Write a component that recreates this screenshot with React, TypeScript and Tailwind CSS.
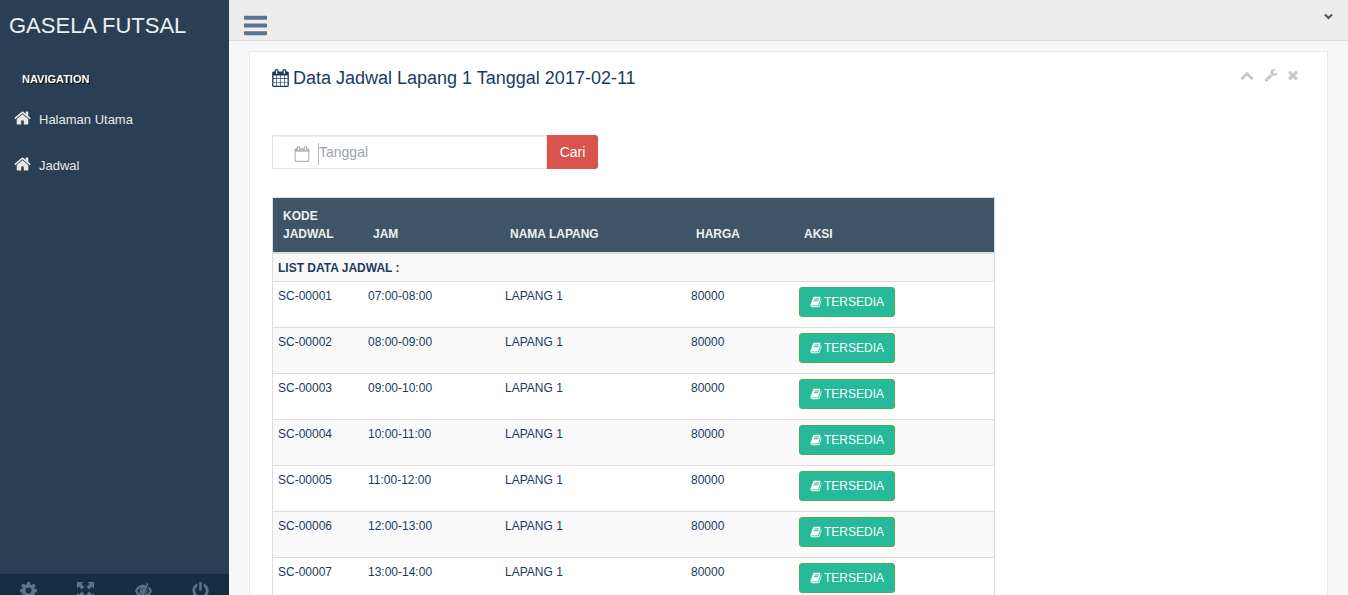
import React from 'react';

type IconProps = { className?: string };

const makeIcon = (path: string, viewBox = '0 0 1792 1792') => ({ className }: IconProps) => (
  <svg viewBox={viewBox} fill="currentColor" className={className} aria-hidden="true">
    <path d={path} fillRule="evenodd" />
  </svg>
);

const HomeIcon = makeIcon(
  'M1472 992v480q0 26-19 45t-45 19h-384v-384h-256v384h-384q-26 0-45-19t-19-45v-480q0-1 .5-3t.5-3l575-474 575 474q1 2 1 6zm223-69l-62 74q-8 9-21 11h-3q-13 0-21-7l-692-577-692 577q-12 8-24 7-13-2-21-11l-62-74q-8-10-7-23.5t11-21.5l719-599q32-26 76-26t76 26l244 204v-195q0-14 9-23t23-9h192q14 0 23 9t9 23v408l219 182q10 8 11 21.5t-7 23.5z',
  '64 0 1664 1792'
);
const BarsIcon = makeIcon(
  'M1664 1344v128q0 26-19 45t-45 19h-1408q-26 0-45-19t-19-45v-128q0-26 19-45t45-19h1408q26 0 45 19t19 45zm0-512v128q0 26-19 45t-45 19h-1408q-26 0-45-19t-19-45v-128q0-26 19-45t45-19h1408q26 0 45 19t19 45zm0-512v128q0 26-19 45t-45 19h-1408q-26 0-45-19t-19-45v-128q0-26 19-45t45-19h1408q26 0 45 19t19 45z'
);
const CalendarIcon = makeIcon(
  'M192 1664h288v-288h-288v288zm352 0h320v-288h-320v288zm-352-352h288v-320h-288v320zm352 0h320v-320h-320v320zm-352-384h288v-288h-288v288zm736 736h320v-288h-320v288zm-384-736h320v-288h-320v288zm768 736h288v-288h-288v288zm-384-352h320v-320h-320v320zm-352-864v-288q0-13-9.5-22.5t-22.5-9.5h-64q-13 0-22.5 9.5t-9.5 22.5v288q0 13 9.5 22.5t22.5 9.5h64q13 0 22.5-9.5t9.5-22.5zm736 864h288v-320h-288v320zm-384-384h320v-288h-320v288zm384 0h288v-288h-288v288zm32-480v-288q0-13-9.5-22.5t-22.5-9.5h-64q-13 0-22.5 9.5t-9.5 22.5v288q0 13 9.5 22.5t22.5 9.5h64q13 0 22.5-9.5t9.5-22.5zm384-64v1280q0 52-38 90t-90 38h-1408q-52 0-90-38t-38-90v-1280q0-52 38-90t90-38h128v-96q0-66 47-113t113-47h64q66 0 113 47t47 113v96h384v-96q0-66 47-113t113-47h64q66 0 113 47t47 113v96h128q52 0 90 38t38 90z',
  '64 0 1664 1792'
);
const CalendarOutlineIcon = makeIcon(
  'M192 1664h1408v-1024h-1408v1024zm384-1216v-288q0-13-9.5-22.5t-22.5-9.5h-64q-13 0-22.5 9.5t-9.5 22.5v288q0 13 9.5 22.5t22.5 9.5h64q13 0 22.5-9.5t9.5-22.5zm768 0v-288q0-13-9.5-22.5t-22.5-9.5h-64q-13 0-22.5 9.5t-9.5 22.5v288q0 13 9.5 22.5t22.5 9.5h64q13 0 22.5-9.5t9.5-22.5zm384-64v1280q0 52-38 90t-90 38h-1408q-52 0-90-38t-38-90v-1280q0-52 38-90t90-38h128v-96q0-66 47-113t113-47h64q66 0 113 47t47 113v96h384v-96q0-66 47-113t113-47h64q66 0 113 47t47 113v96h128q52 0 90 38t38 90z'
);
const ChevronUpIcon = makeIcon(
  'M1683 1331l-166 165q-19 19-45 19t-45-19l-531-531-531 531q-19 19-45 19t-45-19l-166-165q-19-19-19-45.5t19-45.5l742-741q19-19 45-19t45 19l742 741q19 19 19 45.5t-19 45.5z'
);
const WrenchIcon = makeIcon(
  'M448 1472q0-26-19-45t-45-19-45 19-19 45 19 45 45 19 45-19 19-45zm644-420l-682 682q-37 37-90 37-52 0-91-37l-106-108q-38-36-38-90 0-53 38-91l681-681q39 98 114.5 173.5t173.5 114.5zm634-435q0 39-23 106-47 134-164.5 217.5t-258.5 83.5q-185 0-316.5-131.5t-131.5-316.5 131.5-316.5 316.5-131.5q58 0 121.5 16.5t107.5 46.5q16 11 16 28t-16 28l-293 169v224l193 107q5-3 79-48.5t135.5-81 70.5-35.5q15 0 23.5 10t8.5 25z'
);
const CloseIcon = makeIcon(
  'M1490 1322q0 40-28 68l-136 136q-28 28-68 28t-68-28l-294-294-294 294q-28 28-68 28t-68-28l-136-136q-28-28-28-68t28-68l294-294-294-294q-28-28-28-68t28-68l136-136q28-28 68-28t68 28l294 294 294-294q28-28 68-28t68 28l136 136q28 28 28 68t-28 68l-294 294 294 294q28 28 28 68z'
);
const BookIcon = makeIcon(
  'M1703 478q40 57 18 129l-275 906q-19 64-76.5 107.5t-122.5 43.5h-923q-77 0-148.5-53.5t-99.5-131.5q-24-67-2-127 0-4 3-27t4-37q1-8-3-21.5t-3-19.5q2-11 8-21t16.5-23.5 16.5-23.5q23-38 45-91.5t30-91.5q3-10 .5-30t-.5-28q3-11 17-28t17-23q21-36 42-92t25-90q1-9-2.5-32t.5-28q4-13 22-30.5t22-22.5q19-26 42.5-84.5t27.5-96.5q1-8-3-25.5t-2-26.5q2-8 9-18t18-23 17-21q8-12 16.5-30.5t15-35 16-36 19.5-32 26.5-23.5 36-11.5 47.5 5.5l-1 3q38-9 51-9h761q74 0 114 56t18 130l-274 906q-36 119-71.5 153.5t-128.5 34.5h-869q-27 0-38 15-11 16-1 43 24 70 144 70h923q29 0 56-15.5t35-41.5l300-987q7-22 5-57 38 15 59 43zm-1064 2q-4 13 2 22.5t20 9.5h608q13 0 25.5-9.5t16.5-22.5l21-64q4-13-2-22.5t-20-9.5h-608q-13 0-25.5 9.5t-16.5 22.5zm-83 256q-4 13 2 22.5t20 9.5h608q13 0 25.5-9.5t16.5-22.5l21-64q4-13-2-22.5t-20-9.5h-608q-13 0-25.5 9.5t-16.5 22.5z'
);
const CogIcon = makeIcon(
  'M6.6 0h2.8l.4 2.3 1.2.5 1.9-1.4 2 2-1.4 1.9.5 1.2 2.3.4v2.8l-2.3.4-.5 1.2 1.4 1.9-2 2-1.9-1.4-1.2.5-.4 2.3H6.6l-.4-2.3-1.2-.5-1.9 1.4-2-2 1.4-1.9-.5-1.2-2.3-.4V6.9l2.3-.4.5-1.2-1.4-1.9 2-2 1.9 1.4 1.2-.5zM8 5.2a2.8 2.8 0 1 0 0 5.6 2.8 2.8 0 0 0 0-5.6z',
  '0 0 16 16'
);
const FullscreenIcon = makeIcon(
  'M0 0h6L4.2 1.800 7 4.6 4.6 7 1.8 4.2 0 6zM16 0v6l-1.8-1.800L11.400 7 9 4.600l2.800-2.800L10 0zM0 16v-6l1.800 1.800L4.600 9 7 11.400l-2.800 2.800L6 16zM16 16h-6l1.800-1.800L9 11.400 11.400 9l2.800 2.800L16 10z',
  '0 0 16 16'
);
const PowerIcon = makeIcon(
  'M6.800 0h2.400v8H6.800zM5 1.200v2.900a5 5 0 1 0 6 0V1.200a7.600 7.600 0 1 1-6 0z',
  '0 0 16 16'
);

const AngleDownIcon = ({ className }: IconProps) => (
  <svg viewBox="0 0 14 14" fill="none" stroke="currentColor" strokeWidth="2" className={className} aria-hidden="true">
    <path d="M4 5.500l3.500 3.500L11 5.500" />
  </svg>
);

const EyeCloseIcon = ({ className }: IconProps) => (
  <svg viewBox="0 0 18 16" fill="none" stroke="currentColor" className={className} aria-hidden="true">
    <path d="M10.500 3.300C6 2.500 2.800 5 1.200 8.500c1.200 2.600 3 4.200 5.600 4.900M14 4.800c1.300 1 2.200 2.200 2.900 3.700-1.400 2.900-3.600 4.700-6.900 5.200" strokeWidth="2.200" />
    <path d="M11.500 3.200C7.500 2.800 5 5 5 8.200c0 1.800.9 3 2.700 3.800zM13 6.500l-2.600 5.800c2.300-.8 3.400-3.200 2.600-5.800z" fill="currentColor" stroke="none" />
    <path d="M13.200 .5L7.400 15.500" strokeWidth="2" />
    <path d="M7 8c.1-1.300.7-2.100 1.800-2.600" stroke="#172d44" strokeWidth="1" />
  </svg>
);

const menu = ['Halaman Utama', 'Jadwal'];

const footerButtons = [
  { label: 'Settings', Icon: CogIcon },
  { label: 'FullScreen', Icon: FullscreenIcon },
  { label: 'Lock', Icon: EyeCloseIcon },
  { label: 'Logout', Icon: PowerIcon },
];

const schedules = [
  { code: 'SC-00001', time: '07:00-08:00' },
  { code: 'SC-00002', time: '08:00-09:00' },
  { code: 'SC-00003', time: '09:00-10:00' },
  { code: 'SC-00004', time: '10:00-11:00' },
  { code: 'SC-00005', time: '11:00-12:00' },
  { code: 'SC-00006', time: '12:00-13:00' },
  { code: 'SC-00007', time: '13:00-14:00' },
];

const Sidebar = () => (
  <aside className="flex w-[229px] shrink-0 flex-col bg-[#2a3f54] text-[#e7e7e7]">
    <a href="#" className="px-[9px] pt-2.5 text-[22px] leading-8 text-[#ecf0f1]">GASELA FUTSAL</a>
    <h3 className="mt-7 px-[22px] text-[11px] leading-[18px] font-bold text-white [text-shadow:1px_1px_#000]">
      NAVIGATION
    </h3>
    <nav className="mt-2 flex-1">
      <ul>
        {menu.map((item) => (
          <li key={item}>
            <a href="#" className="flex h-[46px] items-center gap-2 px-3.5 pt-0.5 text-[13px]">
              <HomeIcon className="mb-1 h-[18px] w-[17px]" />
              {item}
            </a>
          </li>
        ))}
      </ul>
    </nav>
    <div className="grid h-[21px] grid-cols-4 overflow-hidden bg-[#172d44] pt-2 text-[#5a738e]">
      {footerButtons.map(({ label, Icon }) => (
        <button key={label} type="button" aria-label={label} className="flex justify-center">
          <Icon className="size-[17px]" />
        </button>
      ))}
    </div>
  </aside>
);

const ScheduleTable = () => (
  <table className="mt-7 w-[723px] max-w-full table-fixed border-separate border-spacing-0 border border-[#ddd] text-left text-xs leading-[18px]">
    <colgroup>
      <col className="w-[90px]" />
      <col className="w-[137px]" />
      <col className="w-[186px]" />
      <col className="w-[108px]" />
      <col />
    </colgroup>
    <thead className="bg-[#405467] text-[#ecf0f1]">
      <tr className="h-14 align-bottom [&>th]:border-b-2 [&>th]:border-[#ddd] [&>th]:px-2.5 [&>th]:pb-[9px]">
        <th scope="col">KODE JADWAL</th>
        <th scope="col">JAM</th>
        <th scope="col">NAMA LAPANG</th>
        <th scope="col">HARGA</th>
        <th scope="col">AKSI</th>
      </tr>
    </thead>
    <tbody className="[&_td]:border-b [&_td]:border-[#ddd] [&_td]:px-[5px]">
      <tr className="h-7 bg-[#f9f9f9] font-bold">
        <td colSpan={5}>LIST DATA JADWAL :</td>
      </tr>
      {schedules.map((row) => (
        <tr key={row.code} className="h-[46px] align-top even:bg-white odd:bg-[#f9f9f9] [&>td]:pt-[5px]">
          <td>{row.code}</td>
          <td>{row.time}</td>
          <td>LAPANG 1</td>
          <td>80000</td>
          <td>
            <button
              type="button"
              className="flex h-[30px] items-center gap-0.5 rounded-[3px] border border-[#4cae4c] bg-[#26b99a] px-2.5 text-white"
            >
              <BookIcon className="size-3" />
              TERSEDIA
            </button>
          </td>
        </tr>
      ))}
    </tbody>
  </table>
);

const App = () => {
  return (
    <div className="flex h-screen bg-[#f7f7f7] font-['Liberation_Sans',Arial,sans-serif] text-[#1a3a64]">
      <Sidebar />

      <div className="min-w-0 flex-1 overflow-y-auto [scrollbar-width:none]">
        {/* Top bar */}
        <header className="flex h-[41px] justify-between border-b border-[#d9dee4] bg-[#ededed] px-[13px]">
          <button type="button" aria-label="Toggle menu" className="pt-2.5 text-[#5a738e]">
            <BarsIcon className="size-[27px]" />
          </button>
          <button type="button" aria-label="User menu" className="mb-2 text-[#515356]">
            <AngleDownIcon className="size-3.5" />
          </button>
        </header>

        <main className="px-5 pt-2.5">
          <section className="border border-[#e6e9ed] bg-white px-[22px] pt-3 pb-2.5">
            <div className="flex items-start justify-between">
              <h2 className="flex items-center gap-1 text-lg leading-7">
                <CalendarIcon className="h-[18px] w-[17px]" />
                Data Jadwal Lapang 1 Tanggal 2017-02-11
              </h2>
              <div className="flex gap-2 px-[5px] pt-1 text-[#c5c7cb]">
                <button type="button" aria-label="Collapse">
                  <ChevronUpIcon className="size-3.5" />
                </button>
                <button type="button" aria-label="Settings" className="pl-0.5">
                  <WrenchIcon className="size-3.5" />
                </button>
                <button type="button" aria-label="Close">
                  <CloseIcon className="size-3.5" />
                </button>
              </div>
            </div>

            {/* Date search */}
            <form className="mt-[43px] flex w-[326px] text-sm">
              <label
                htmlFor="tanggal"
                className="flex h-[34px] min-w-0 flex-1 items-center border border-[#dde2e8] pl-[21px] inset-shadow-[0_1px_1px_rgba(0,0,0,0.075)]"
              >
                <CalendarOutlineIcon className="mt-1 size-4 shrink-0 text-[#b5b5b5]" />
                <span className="mt-1 ml-2 h-[22px] border-l border-[#bbb]" />
                <input
                  id="tanggal"
                  type="text"
                  placeholder="Tanggal"
                  aria-label="Tanggal"
                  className="w-full min-w-0 bg-transparent outline-none placeholder:text-[#99a2ad]"
                />
              </label>
              <button
                type="button"
                className="w-[51px] rounded-r-[3px] bg-[#d9534f] text-white"
              >
                Cari
              </button>
            </form>

            <ScheduleTable />
          </section>
        </main>
      </div>
    </div>
  );
};

export default App;
